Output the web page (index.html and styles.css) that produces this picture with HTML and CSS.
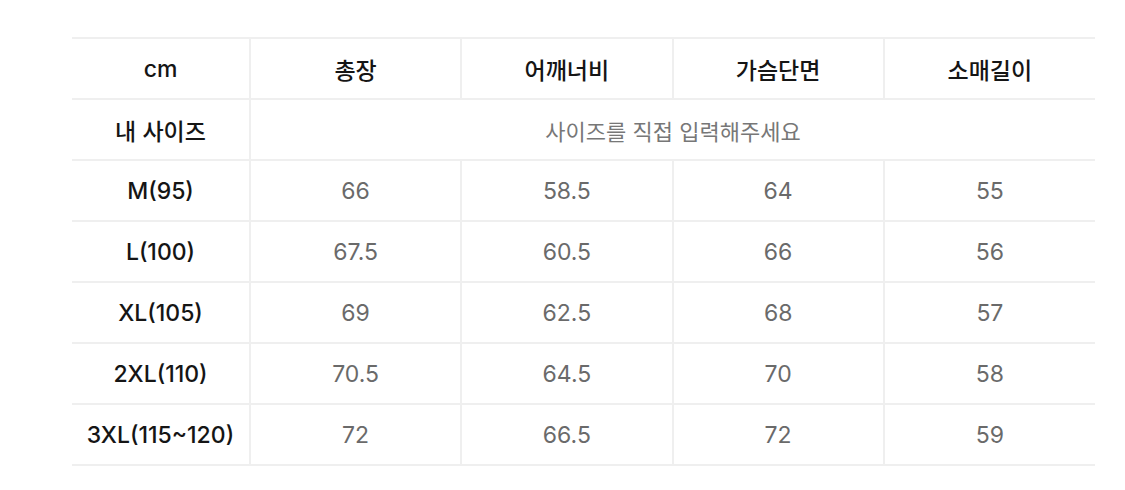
FILE: index.html
```html
<!DOCTYPE html>
<html lang="ko">
<head>
<meta charset="utf-8">
<link rel="stylesheet" href="styles.css">
</head>
<body>
<div class="wrap">
<table class="size-table">
  <colgroup>
    <col class="c-first"><col class="c"><col class="c"><col class="c"><col class="c">
  </colgroup>
  <thead>
    <tr><th>cm</th><th class="b">총장</th><th class="b">어깨너비</th><th class="b">가슴단면</th><th class="b">소매길이</th></tr>
  </thead>
  <tbody>
    <tr><th>내 사이즈</th><td class="b mine" colspan="4">사이즈를 직접 입력해주세요</td></tr>
    <tr><th>M(95)</th><td class="b">66</td><td class="b">58.5</td><td class="b">64</td><td class="b">55</td></tr>
    <tr><th>L(100)</th><td class="b">67.5</td><td class="b">60.5</td><td class="b">66</td><td class="b">56</td></tr>
    <tr><th>XL(105)</th><td class="b">69</td><td class="b">62.5</td><td class="b">68</td><td class="b">57</td></tr>
    <tr><th>2XL(110)</th><td class="b">70.5</td><td class="b">64.5</td><td class="b">70</td><td class="b">58</td></tr>
    <tr><th>3XL(115~120)</th><td class="b">72</td><td class="b">66.5</td><td class="b">72</td><td class="b">59</td></tr>
  </tbody>
</table>
</div>
</body>
</html>
```
FILE: styles.css
```css
html, body {
  margin: 0;
  padding: 0;
  background: #ffffff;
}
.wrap {
  padding: 37px 0 0 72px;
}
.size-table {
  width: 1023px;
  border-collapse: collapse;
  table-layout: fixed;
  font-family: "Inter", "Noto Sans CJK KR", sans-serif;
  font-size: 23px;
  border-top: 2px solid #efefef;
}
.c-first { width: 178px; }
.size-table th,
.size-table td {
  height: 59px;
  padding: 0;
  text-align: center;
  vertical-align: middle;
  border-bottom: 2px solid #efefef;
}
.size-table th {
  color: #151515;
  font-weight: 500;
}
.size-table td {
  color: #6a6a6a;
  font-weight: 400;
}
.size-table .b {
  border-left: 2px solid #efefef;
}
.size-table .mine {
  color: #777777;
  font-size: 22px;
}
```
